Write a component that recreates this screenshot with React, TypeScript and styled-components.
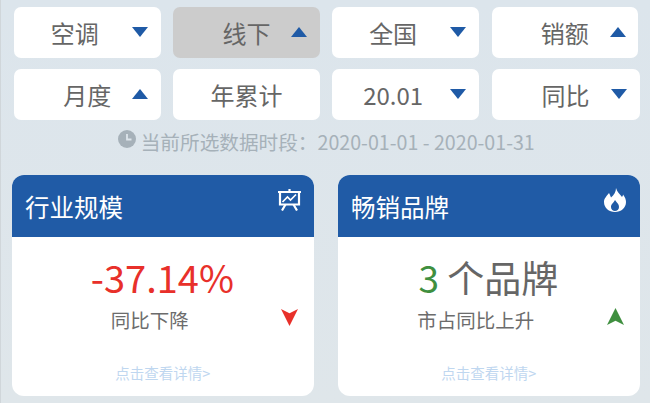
import styled, { createGlobalStyle } from "styled-components"

const cjk = `"Noto Sans CJK SC", "Noto Sans", sans-serif`

const GlobalStyle = createGlobalStyle`
    html, body {
        margin: 0;
        padding: 0;
        background: #dde5eb;
    }
`

const Page = styled.div`
    width: 650px;
    height: 403px;
    overflow: hidden;
    box-sizing: border-box;
    padding: 7px 10.5px 0 12px;
    border-left: 1px solid #d0d6da;
    font-family: ${cjk};
    background: linear-gradient(#dce5ec, #dfe6ea);
`

const FilterGrid = styled.div`
    display: grid;
    grid-template-columns: repeat(4, 146.5px);
    gap: 11.5px 12.7px;
    padding-left: 1px;
`

const FilterButton = styled.div<{ $active?: boolean; $shift?: boolean; $wide?: boolean }>`
    position: relative;
    height: 50.5px;
    border-radius: 7px;
    background: ${p => (p.$active ? "#cccccc" : "#ffffff")};
    margin-right: ${p => (p.$wide ? "-1.5px" : "0")};
    padding: 2px ${p => (p.$shift ? "25px" : "0")} 0 0;
    box-sizing: border-box;
    display: flex;
    align-items: center;
    justify-content: center;
    color: #666666;
    font-size: 24px;
    line-height: 1;
`

const Arrow = styled.span<{ $up?: boolean }>`
    position: absolute;
    right: 12.5px;
    top: 19.5px;
    width: 0;
    height: 0;
    border-left: 8.5px solid transparent;
    border-right: 8.5px solid transparent;
    ${p => (p.$up ? "border-bottom" : "border-top")}: 10px solid #1f5aa6;
`

const Caption = styled.div`
    height: 44px;
    display: flex;
    align-items: center;
    justify-content: center;
    gap: 5px;
    color: #a6b1b9;
    font-size: 19.65px;
    white-space: nowrap;
`

const ClockIcon = styled.svg`
    width: 18px;
    height: 18px;
    margin-top: -5px;
    flex: none;
`

const CardRow = styled.div`
    display: grid;
    grid-template-columns: repeat(2, 301.7px);
    gap: 24.3px;
    margin-top: 11px;
    margin-left: -1px;
`

const Card = styled.div`
    height: 221px;
    border-radius: 12px;
    background: #ffffff;
    overflow: hidden;
    display: flex;
    flex-direction: column;
`

const CardHeader = styled.div`
    position: relative;
    height: 62px;
    flex: none;
    background: #205ba6;
    color: #ffffff;
    font-size: 24.5px;
    line-height: 64px;
    padding-left: 13px;
`

const HeaderIcon = styled.div`
    position: absolute;
    right: 13px;
    top: 13px;
    width: 23px;
    height: 24px;
    display: flex;
    align-items: center;
    justify-content: center;
`

const CardBody = styled.div`
    position: relative;
    flex: 1;
    display: flex;
    flex-direction: column;
    align-items: center;
    padding-right: 1px;
`

const Headline = styled.div<{ $big?: boolean }>`
    margin-top: 15px;
    height: 50px;
    font-size: ${p => (p.$big ? "38px" : "37px")};
    line-height: 50px;
    color: #666666;
    white-space: nowrap;
`

const Accent = styled.span<{ $color: string }>`
    color: ${p => p.$color};
`

const SubLabel = styled.div`
    margin-top: 4px;
    margin-right: 25px;
    font-size: 19.5px;
    line-height: 28px;
    color: #6c6c6c;
    white-space: nowrap;
`

const DetailLink = styled.div`
    position: absolute;
    left: 0;
    right: 0;
    bottom: 13px;
    text-align: center;
    font-size: 14.5px;
    line-height: 20px;
    color: #bfd7f0;
`

const TrendIcon = styled.svg`
    position: absolute;
    right: 16px;
    top: 71px;
    width: 17px;
    height: 18px;
`

const filters = [
    { label: "空调", arrow: "down", shift: true },
    { label: "线下", arrow: "up", active: true },
    { label: "全国", arrow: "down", shift: true },
    { label: "销额", arrow: "up" },
    { label: "月度", arrow: "up" },
    { label: "年累计" },
    { label: "20.01", arrow: "down", shift: true },
    { label: "同比", arrow: "down", wide: true },
]

const ChartIcon = () => (
    <svg width="23" height="22" viewBox="0 0 23 22" fill="none" stroke="#fff" strokeWidth="2.2">
        <path d="M11.5 0v3" />
        <path d="M0 3h23" />
        <path d="M2 3v12.5h19V3" />
        <path d="M4.5 13l5-5 3 3L18 5.5" strokeWidth="1.7" />
        <path d="M7.5 15.5l-3.5 6M15.5 15.5l3.5 6" />
    </svg>
)

const FlameIcon = () => (
    <svg width="22" height="24" viewBox="0 0 22 24">
        <path
            fill="#fff"
            fillRule="evenodd"
            d="M12 0C13 4 16 6 18 9C19 7.5 19 7 19 6.5C21 9 22 11.5 22 14C22 20 17 24 11 24C5 24 0 20 0 14C0 10 3 8 5 5C6 7 6.5 8 7 9.5C10 7 12 4 12 0ZM11 12C13 15 15 16 15 19C15 21.5 13 23 11 23C9 23 7 21.5 7 19C7 16 9.5 15 11 12Z"
        />
    </svg>
)

const TrendArrow = ({ up, color }: { up?: boolean; color: string }) => (
    <TrendIcon viewBox="0 0 18 19">
        <path
            fill={color}
            d={up ? "M9 0L18 18L9 13.5L0 18Z" : "M9 19L0 1L9 5.5L18 1Z"}
        />
    </TrendIcon>
)

export default function App() {
    return (
        <>
            <GlobalStyle />
            <Page>
                <FilterGrid>
                    {filters.map(f => (
                        <FilterButton key={f.label} $active={f.active} $shift={f.shift} $wide={f.wide}>
                            {f.label}
                            {f.arrow && <Arrow $up={f.arrow === "up"} />}
                        </FilterButton>
                    ))}
                </FilterGrid>
                <Caption>
                    <ClockIcon viewBox="0 0 18 18">
                        <circle cx="9" cy="9" r="9" fill="#a6b1b9" />
                        <path d="M9 4v5.5h4.5" fill="none" stroke="#dde5eb" strokeWidth="1.8" />
                    </ClockIcon>
                    当前所选数据时段：2020-01-01 - 2020-01-31
                </Caption>
                <CardRow>
                    <Card>
                        <CardHeader>
                            行业规模
                            <HeaderIcon><ChartIcon /></HeaderIcon>
                        </CardHeader>
                        <CardBody>
                            <Headline $big><Accent $color="#e8302a">-37.14%</Accent></Headline>
                            <SubLabel>同比下降</SubLabel>
                            <TrendArrow color="#e8302a" />
                            <DetailLink>点击查看详情&gt;</DetailLink>
                        </CardBody>
                    </Card>
                    <Card>
                        <CardHeader>
                            畅销品牌
                            <HeaderIcon><FlameIcon /></HeaderIcon>
                        </CardHeader>
                        <CardBody>
                            <Headline><Accent $color="#3f8f3f">3</Accent> 个品牌</Headline>
                            <SubLabel>市占同比上升</SubLabel>
                            <TrendArrow up color="#3f8f3f" />
                            <DetailLink>点击查看详情&gt;</DetailLink>
                        </CardBody>
                    </Card>
                </CardRow>
            </Page>
        </>
    )
}
